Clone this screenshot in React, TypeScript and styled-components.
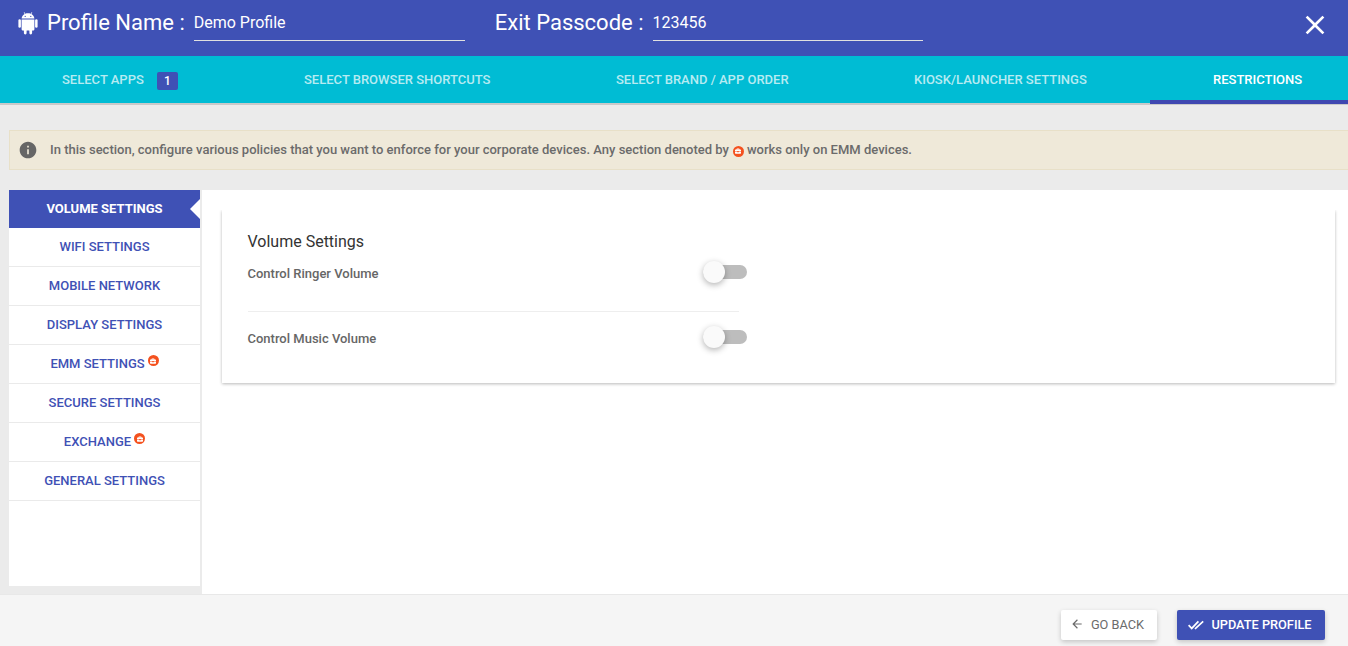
import React from "react";
import styled, { createGlobalStyle } from "styled-components";
import { FaBriefcase } from "react-icons/fa";
import { MdArrowBack, MdClose, MdInfo } from "react-icons/md";

const Global = createGlobalStyle`
  html, body { margin: 0; padding: 0; height: 100%; }
  body { background: #ebebeb; font-family: Roboto, "Liberation Sans", sans-serif; overflow: hidden; }
  * { box-sizing: border-box; }
`;

const Page = styled.div`
  width: 1348px;
  height: 646px;
  display: flex;
  flex-direction: column;
  background: #ebebeb;
`;
const Header = styled.header`
  height: 56px;
  background: #3f51b5;
  display: flex;
  align-items: flex-start;
  padding-left: 18px;
  color: #fff;
`;
const AndroidSvg = styled.svg`
  width: 20px;
  height: 24px;
  margin-top: 11px;
  margin-right: 9px;
  flex: none;
`;
const HeaderLabel = styled.span`
  font-size: 22px;
  line-height: 26px;
  margin-top: 10px;
  margin-right: 9px;
  white-space: nowrap;
`;
const HeaderField = styled.div<{ $w: number; $mr: number }>`
  width: ${(p) => p.$w}px;
  margin-right: ${(p) => p.$mr}px;
  height: 41px;
  border-bottom: 1px solid #e0e0e0;
  font-size: 16px;
  line-height: 20px;
  padding-top: 13px;
`;
const CloseButton = styled(MdClose)`
  position: absolute;
  left: 1299px;
  top: 9px;
  width: 32px;
  height: 32px;
  color: #fff;
`;
const TabBar = styled.nav`
  height: 49px;
  background: #00bcd4;
  border-bottom: 2px solid #c9c9c9;
  display: flex;
`;
const Tab = styled.div<{ $active?: boolean; $w: number; $pl: number }>`
  width: ${(p) => p.$w}px;
  height: 48px;
  padding: 16px 0 0 ${(p) => p.$pl}px;
  font-size: 13px;
  line-height: 15px;
  font-weight: 500;
  white-space: nowrap;
  display: flex;
  align-items: flex-start;
  color: ${(p) => (p.$active ? "#fff" : "rgba(255,255,255,0.72)")};
  border-bottom: ${(p) => (p.$active ? "4px solid #3f47b0" : "none")};
`;
const Badge = styled.span`
  width: 21px;
  height: 18px;
  margin-left: 13px;
  background: #3f51b5;
  border-radius: 2px;
  color: #fff;
  font-weight: 500;
  font-size: 12px;
  line-height: 18px;
  text-align: center;
`;
const Notice = styled.div`
  margin: 25px 0 20px 9px;
  height: 40px;
  background: #efe9d9;
  border: 1px solid #e8e0c8;
  border-right: none;
  display: flex;
  align-items: center;
  padding-left: 8px;
  font-size: 13px;
  font-weight: 500;
  color: #6b6b6b;
  line-height: 15px;
  padding-bottom: 1px;
`;
const InfoIcon = styled(MdInfo)`
  width: 20px;
  height: 20px;
  color: #666;
  margin-right: 12px;
`;
const EmmDot = styled.span`
  display: inline-flex;
  align-items: center;
  justify-content: center;
  width: 11px;
  height: 11px;
  border-radius: 50%;
  background: #f4511e;
  color: #fff;
  font-size: 6px;
`;
const NoticeDot = styled(EmmDot)`
  margin: 3px 3px 0 4px;
`;
const Body = styled.div`
  flex: 1;
  display: flex;
  padding-left: 9px;
  min-height: 0;
`;
const Sidebar = styled.aside`
  width: 191px;
  height: 396px;
  background: #fff;
  flex: none;
`;
const SideItem = styled.div<{ $active?: boolean }>`
  position: relative;
  height: ${(p) => (p.$active ? 38 : 39)}px;
  display: flex;
  align-items: center;
  justify-content: center;
  font-size: 13px;
  line-height: 15px;
  padding-bottom: 2px;
  font-weight: ${(p) => (p.$active ? 700 : 500)};
  color: ${(p) => (p.$active ? "#fff" : "#3f51b5")};
  background: ${(p) => (p.$active ? "#3f51b5" : "#fff")};
  border-bottom: ${(p) => (p.$active ? "none" : "1px solid #eaeaea")};
  white-space: nowrap;
`;
const SideDot = styled(EmmDot)`
  margin: -5px 0 0 3px;
`;
const Arrow = styled.span`
  position: absolute;
  right: 0;
  top: 9px;
  width: 0;
  height: 0;
  border-top: 10px solid transparent;
  border-bottom: 10px solid transparent;
  border-right: 10px solid #fff;
`;
const Main = styled.main`
  margin-left: 2px;
  flex: 1;
  height: 404px;
  background: #fff;
  padding: 20px 13px 0 20px;
`;
const Card = styled.section`
  height: 173px;
  background: #fff;
  box-shadow: 0 1px 3px rgba(0, 0, 0, 0.28);
  clip-path: inset(0 -6px -6px -6px);
  padding: 22px 25.5px 0;
`;
const CardTitle = styled.h2`
  margin: 0;
  font-size: 16px;
  line-height: 20px;
  font-weight: 400;
  color: #333;
`;
const SettingRow = styled.div<{ $divider?: boolean; $h: number }>`
  width: 491px;
  height: ${(p) => p.$h}px;
  position: relative;
  display: flex;
  font-size: 13px;
  font-weight: 500;
  color: #666;
  border-bottom: ${(p) => (p.$divider ? "1px solid #eee" : "none")};
`;
const RowLabel = styled.span<{ $top: number }>`
  margin-top: ${(p) => p.$top}px;
  line-height: 15px;
`;
const Toggle = styled.span<{ $top: number }>`
  position: absolute;
  left: 455.5px;
  top: ${(p) => p.$top}px;
  width: 44px;
  height: 14px;
  border-radius: 7px;
  background: #bdbdbd;
`;
const Knob = styled.span`
  position: absolute;
  left: 0;
  top: -4px;
  width: 22px;
  height: 22px;
  border-radius: 50%;
  background: #fafafa;
  box-shadow: 0 2px 6px rgba(0, 0, 0, 0.3);
`;
const Footer = styled.footer`
  height: 52px;
  background: #f5f5f5;
  border-top: 1px solid #e8e8e8;
  display: flex;
  justify-content: flex-end;
  align-items: flex-start;
  padding: 15px 23px 0 0;
  gap: 20px;
`;
const Button = styled.button<{ $primary?: boolean }>`
  height: 30px;
  border: none;
  border-radius: 2px;
  font-family: inherit;
  font-size: 12.75px;
  font-weight: ${(p) => (p.$primary ? 500 : 400)};
  display: flex;
  align-items: center;
  justify-content: center;
  gap: 7px;
  padding: 0 ${(p) => (p.$primary ? 2 : 4)}px 2px 0;
  width: ${(p) => (p.$primary ? 148 : 96)}px;
  background: ${(p) => (p.$primary ? "#3f51b5" : "#fff")};
  color: ${(p) => (p.$primary ? "#fff" : "#6b6b6b")};
  box-shadow: 0 2px 5px rgba(0, 0, 0, 0.2);
`;
const DoneSvg = styled.svg`
  width: 16px;
  height: 10px;
  margin-top: 1px;
`;

const side: { label: string; emm?: boolean }[] = [
  { label: "WIFI SETTINGS" },
  { label: "MOBILE NETWORK" },
  { label: "DISPLAY SETTINGS" },
  { label: "EMM SETTINGS", emm: true },
  { label: "SECURE SETTINGS" },
  { label: "EXCHANGE", emm: true },
  { label: "GENERAL SETTINGS" },
];

const AndroidIcon = () => (
  <AndroidSvg viewBox="0 0 20 24" fill="#fff">
    <path d="M3.6 7.6C3.8 5.3 5.2 3.8 6.6 3.1L5.7 1.3 6.2 1 7.2 2.8C8.9 2.2 11 2.2 12.8 2.8L13.8 1 14.3 1.3 13.4 3.1C14.8 3.8 16.2 5.3 16.4 7.6Z" />
    <path d="M3.6 8.4H16.4V18.2C16.4 19 15.8 19.5 15 19.5H5C4.2 19.5 3.6 19 3.6 18.2Z" />
    <rect x="0.4" y="8.2" width="2.5" height="8.6" rx="1.25" />
    <rect x="17.1" y="8.2" width="2.5" height="8.6" rx="1.25" />
    <rect x="5.9" y="18" width="2.7" height="5.4" rx="1.3" />
    <rect x="11.4" y="18" width="2.7" height="5.4" rx="1.3" />
    <circle cx="7.2" cy="5.4" r="0.6" fill="#3f51b5" />
    <circle cx="12.8" cy="5.4" r="0.6" fill="#3f51b5" />
  </AndroidSvg>
);

const DoneAll = () => (
  <DoneSvg viewBox="0 0 16 10" fill="none" stroke="#fff" strokeWidth="1.7">
    <path d="M0.6 5.2 3.7 8.4 10.4 1.4" />
    <path d="M7 7.8 7.6 8.4 15.2 1.4" />
  </DoneSvg>
);

export default function App() {
  return (
    <Page>
      <Global />
      <Header>
        <AndroidIcon />
        <HeaderLabel>Profile Name :</HeaderLabel>
        <HeaderField $w={271} $mr={30}>Demo Profile</HeaderField>
        <HeaderLabel>Exit Passcode :</HeaderLabel>
        <HeaderField $w={270} $mr={0}>123456</HeaderField>
        <CloseButton />
      </Header>
      <TabBar>
        <Tab $w={242} $pl={62}>SELECT APPS<Badge>1</Badge></Tab>
        <Tab $w={311} $pl={62}>SELECT BROWSER SHORTCUTS</Tab>
        <Tab $w={299} $pl={63}>SELECT BRAND / APP ORDER</Tab>
        <Tab $w={298} $pl={62}>KIOSK/LAUNCHER SETTINGS</Tab>
        <Tab $w={198} $pl={63} $active>RESTRICTIONS</Tab>
      </TabBar>
      <Notice>
        <InfoIcon />
        In this section, configure various policies that you want to enforce for your corporate devices. Any section denoted by
        <NoticeDot><FaBriefcase /></NoticeDot>
        works only on EMM devices.
      </Notice>
      <Body>
        <Sidebar>
          <SideItem $active>VOLUME SETTINGS<Arrow /></SideItem>
          {side.map((s) => (
            <SideItem key={s.label}>
              {s.label}
              {s.emm && <SideDot><FaBriefcase /></SideDot>}
            </SideItem>
          ))}
        </Sidebar>
        <Main>
          <Card>
            <CardTitle>Volume Settings</CardTitle>
            <SettingRow $divider $h={60}>
              <RowLabel $top={14}>Control Ringer Volume</RowLabel>
              <Toggle $top={13}><Knob /></Toggle>
            </SettingRow>
            <SettingRow $h={60}>
              <RowLabel $top={19}>Control Music Volume</RowLabel>
              <Toggle $top={18}><Knob /></Toggle>
            </SettingRow>
          </Card>
        </Main>
      </Body>
      <Footer>
        <Button><MdArrowBack size={14} />GO BACK</Button>
        <Button $primary><DoneAll />UPDATE PROFILE</Button>
      </Footer>
    </Page>
  );
}
